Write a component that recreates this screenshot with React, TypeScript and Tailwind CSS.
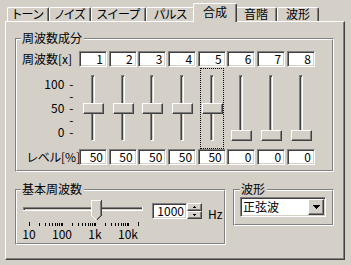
import React from "react";

const sunken =
  "border border-t-[#808080] border-l-[#808080] border-b-white border-r-white shadow-[inset_1px_1px_0_#404040,inset_-1px_-1px_0_#d4d0c8]";
const raised =
  "border border-t-white border-l-white border-b-[#404040] border-r-[#404040] shadow-[inset_-1px_-1px_0_#808080]";

const tabs = [
  { label: "トーン", w: "w-[42px]", selected: false },
  { label: "ノイズ", w: "w-[42px]", selected: false },
  { label: "スイープ", w: "w-[55px]", selected: false },
  { label: "パルス", w: "w-[49px]", selected: false },
  { label: "合成", w: "w-[44px]", selected: true },
  { label: "音階", w: "w-[42px]", selected: false },
  { label: "波形", w: "w-[42px]", selected: false },
];

function Tab({ label, w, selected }: { label: string; w: string; selected: boolean }) {
  if (selected) {
    return (
      <div
        className={`relative z-10 -mx-[2px] -mb-px flex h-[19px] ${w} shrink-0 justify-center rounded-t-[2px] border-l border-r border-t border-l-white border-r-[#404040] border-t-white bg-[#d4d0c8] pt-[2px] leading-[12px] shadow-[inset_-1px_0_0_#808080] [font-feature-settings:'palt']`}
      >
        {label}
      </div>
    );
  }
  return (
    <div
      className={`flex h-[14px] ${w} shrink-0 justify-center rounded-t-[2px] border-l border-r border-t border-l-white border-r-[#404040] border-t-white leading-[11px] shadow-[inset_-1px_0_0_#808080] [font-feature-settings:'palt']`}
    >
      {label}
    </div>
  );
}

function Group({
  title,
  className,
  titleLeft,
  children,
}: {
  title: string;
  className: string;
  titleLeft: string;
  children?: React.ReactNode;
}) {
  return (
    <div
      className={`relative shrink-0 border border-b-white border-l-[#808080] border-r-white border-t-[#808080] ${className}`}
    >
      <div className="h-full w-full border border-b-[#808080] border-l-white border-r-[#808080] border-t-white">
        {children}
      </div>
      <span
        className={`absolute top-[-8px] ${titleLeft} whitespace-nowrap bg-[#d4d0c8] pl-[1px] pr-[2px] leading-[14px]`}
      >
        {title}
      </span>
    </div>
  );
}

function Field({ value }: { value: number }) {
  return (
    <div className={`${sunken} flex items-center justify-end bg-white pr-[3px] leading-[12px]`}>
      {value}
    </div>
  );
}

function VSlider({ value, focused }: { value: number; focused: boolean }) {
  const top = 9 + Math.round((100 - value) * 0.54);
  return (
    <div className="relative flex justify-center pt-[8px]">
      <div className="h-[66px] w-[4px] border border-b-white border-l-[#808080] border-r-white border-t-[#808080] shadow-[inset_1px_1px_0_#404040]" />
      <div
        className={`absolute left-[4px] h-[11px] w-[21px] bg-[#d4d0c8] ${raised}`}
        style={{ top }}
      />
      {focused && (
        <div className="absolute left-[2px] top-[1px] h-[81px] w-[24px] border border-dotted border-black" />
      )}
    </div>
  );
}

function ScaleLine({ n }: { n?: string }) {
  return (
    <div className="flex h-[12px] justify-end gap-[4px] leading-[12px]">
      {n && <span>{n}</span>}
      <span className="w-[6px] text-center">-</span>
    </div>
  );
}

const freqs = [1, 2, 3, 4, 5, 6, 7, 8];
const levels = [50, 50, 50, 50, 50, 0, 0, 0];

const tickValues: number[] = [];
for (let d = 10; d <= 10000; d *= 10) {
  for (let k = 1; k <= 9; k++) {
    const v = d * k;
    if (v <= 20000) tickValues.push(v);
  }
}
tickValues.push(20000);
const uniqTicks = Array.from(new Set(tickValues));

function HTrack() {
  const scale = 109 / Math.log10(2000);
  return (
    <svg width={133} height={30} shapeRendering="crispEdges" className="block">
      <rect x={6} y={9} width={120} height={1} fill="#808080" />
      <rect x={6} y={9} width={1} height={4} fill="#808080" />
      <rect x={7} y={10} width={118} height={1} fill="#404040" />
      <rect x={7} y={10} width={1} height={2} fill="#404040" />
      <rect x={6} y={12} width={120} height={1} fill="#ffffff" />
      <rect x={125} y={9} width={1} height={4} fill="#ffffff" />
      {uniqTicks.map((v, i) => {
        const x = Math.round(29 + scale * Math.log10(v / 10)) - 17;
        const big = i === 0 || i === uniqTicks.length - 1;
        return (
          <rect
            key={v}
            x={x}
            y={big ? 24 : 25}
            width={1}
            height={big ? 4 : 3}
            fill="#000000"
          />
        );
      })}
      <polygon points="74,2 85,2 85,18 80,23 79,23 74,18" fill="#d4d0c8" />
      <path d="M74.5 18 V2.5 H84" stroke="#ffffff" fill="none" />
      <path d="M74.5 17.5 L79.5 22.5" stroke="#ffffff" fill="none" />
      <path d="M84.5 2 V17.5 L79.5 22.5" stroke="#404040" fill="none" />
      <path d="M83.5 3 V17.5 L79.5 21.5" stroke="#808080" fill="none" />
    </svg>
  );
}

export default function App() {
  return (
    <div className="h-[265px] w-[351px] overflow-hidden bg-[#d4d0c8] font-['Noto_Sans_CJK_JP',sans-serif] text-[12px] leading-[12px] text-black">
      <div className="relative z-10 flex h-[21px] items-end pl-[7px]">
        {tabs.map((t) => (
          <Tab key={t.label} {...t} />
        ))}
      </div>
      <div className="relative ml-[5px] flex h-[239px] w-[340px] flex-col border border-b-[#404040] border-l-white border-r-[#404040] border-t-white pl-[9px] pt-[16px] shadow-[inset_-1px_-1px_0_#808080]">
        <Group title="周波数成分" className="h-[134px] w-[319px]" titleLeft="left-[5px]">
          <div className="grid grid-cols-[60.3px_repeat(8,28px)] grid-rows-[16px_82px_16px] gap-x-[1.7px] pt-[11px]">
            <div className="flex items-center whitespace-nowrap pl-[5px]">周波数[x]</div>
            {freqs.map((f) => (
              <Field key={`f${f}`} value={f} />
            ))}
            <div className="flex flex-col pr-[3px] pt-[11px]">
              <ScaleLine n="100" />
              <ScaleLine />
              <ScaleLine n="50" />
              <ScaleLine />
              <ScaleLine n="0" />
            </div>
            {levels.map((v, i) => (
              <VSlider key={`s${i}`} value={v} focused={i === 4} />
            ))}
            <div className="flex items-center whitespace-nowrap pl-[10px] [font-feature-settings:'palt']">レベル[%]</div>
            {levels.map((v, i) => (
              <Field key={`l${i}`} value={v} />
            ))}
          </div>
        </Group>
        <div className="mt-[17px] flex items-start gap-[7px]">
          <Group title="基本周波数" className="h-[56px] w-[211px]" titleLeft="left-[5px]">
            <div className="flex">
              <div className="flex flex-col pt-[7px]">
                <HTrack />
                <div className="-ml-[4.5px] flex leading-[12px]">
                  {["10", "100", "1k", "10k"].map((l) => (
                    <span key={l} className="w-[33px] text-center">
                      {l}
                    </span>
                  ))}
                </div>
              </div>
              <div className="ml-[2px] mt-[12px] flex h-[16px]">
                <div className={`${sunken} flex w-[35px] items-center justify-end bg-white pr-[2px]`}>
                  1000
                </div>
                <div className="flex w-[15px] flex-col">
                  <div className={`${raised} flex h-[8px] items-center justify-center bg-[#d4d0c8]`}>
                    <svg width={3} height={2} shapeRendering="crispEdges" className="block">
                      <path d="M1 0h1v1h1v1h-3v-1h1z" fill="#000" />
                    </svg>
                  </div>
                  <div className={`${raised} flex h-[8px] items-center justify-center bg-[#d4d0c8]`}>
                    <svg width={3} height={2} shapeRendering="crispEdges" className="block">
                      <path d="M0 0h3v1h-1v1h-1v-1h-1z" fill="#000" />
                    </svg>
                  </div>
                </div>
              </div>
              <span className="ml-[6px] mt-[17px] leading-[12px]">Hz</span>
            </div>
          </Group>
          <Group title="波形" className="h-[37px] w-[101px]" titleLeft="left-[6px]">
            <div className={`${sunken} ml-[5px] mt-[6px] flex h-[20px] w-[86px] items-center justify-between bg-white pl-[2px] pr-[1px]`}>
              <span className="leading-[12px]">正弦波</span>
              <div className={`${raised} flex h-[16px] w-[16px] items-center justify-center bg-[#d4d0c8]`}>
                <svg width={7} height={4} shapeRendering="crispEdges" className="block">
                  <path d="M0 0h7v1h-1v1h-1v1h-1v1h-1v-1h-1v-1h-1v-1h-1z" fill="#000" />
                </svg>
              </div>
            </div>
          </Group>
        </div>
      </div>
    </div>
  );
}
